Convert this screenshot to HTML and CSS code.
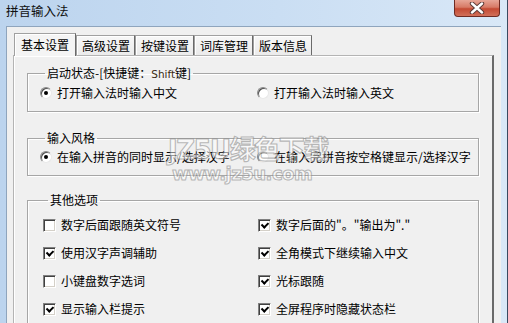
FILE: index.html
```html
<!DOCTYPE html>
<html lang="zh-CN">
<head>
    <meta charset="UTF-8">
    <title>拼音输入法</title>
    <link rel="stylesheet" href="styles.css">
</head>
<body>

    <div class="window">
        <!-- Title bar -->
        <div class="titlebar">
            <span class="title">拼音输入法</span>
            <div class="close">
                <svg viewBox="0 0 20 12" width="20" height="12">
                    <path d="M5 1.5 15 10.5M15 1.5 5 10.5" stroke="#5a3a36" stroke-width="4.4" stroke-linecap="round"></path>
                    <path d="M5 1.5 15 10.5M15 1.5 5 10.5" stroke="#fff" stroke-width="2.4" stroke-linecap="round"></path>
                </svg>
            </div>
        </div>

        <div class="client">
            <!-- Tabs -->
            <div class="tabs">
                <div class="tab active">基本设置</div>
                <div class="tab">高级设置</div>
                <div class="tab">按键设置</div>
                <div class="tab">词库管理</div>
                <div class="tab">版本信息</div>
            </div>

            <div class="panel">
                <fieldset class="group">
                    <legend>启动状态-[快捷键：<span class="latin">Shift</span>键]</legend>
                    <div class="options radios">
                        <label class="opt"><span class="radio checked"></span>打开输入法时输入中文</label>
                        <label class="opt"><span class="radio"></span>打开输入法时输入英文</label>
                    </div>
                </fieldset>

                <fieldset class="group style">
                    <legend>输入风格</legend>
                    <div class="options radios">
                        <label class="opt"><span class="radio checked"></span>在输入拼音的同时显示/选择汉字</label>
                        <label class="opt"><span class="radio"></span>在输入完拼音按空格键显示/选择汉字</label>
                    </div>
                </fieldset>

                <fieldset class="group other">
                    <legend>其他选项</legend>
                    <div class="options checks">
                        <label class="opt"><span class="check"></span>数字后面跟随英文符号</label>
                        <label class="opt"><span class="check checked"></span>数字后面的"。"输出为"."</label>
                        <label class="opt"><span class="check checked"></span>使用汉字声调辅助</label>
                        <label class="opt"><span class="check checked"></span>全角模式下继续输入中文</label>
                        <label class="opt"><span class="check"></span>小键盘数字选词</label>
                        <label class="opt"><span class="check checked"></span>光标跟随</label>
                        <label class="opt"><span class="check checked"></span>显示输入栏提示</label>
                        <label class="opt"><span class="check checked"></span>全屏程序时隐藏状态栏</label>
                    </div>
                </fieldset>
            </div>
        </div>

        <!-- Watermark -->
        <div class="watermark">
            <div class="wm-big">JZ5U绿色下载</div>
            <div class="wm-small">www.jz5u.com</div>
        </div>
    </div>

</body>
</html>
```

FILE: styles.css
```css
body {
    margin: 0;
    width: 508px;
    height: 323px;
    overflow: hidden;
    font-family: "Noto Sans CJK SC", "Liberation Sans", sans-serif;
    font-size: 12px;
    color: #000;
}

.window {
    position: relative;
    height: 323px;
    display: flex;
    flex-direction: column;
    background: linear-gradient(to right, #bcd4ee, #cadef3 55%, #d9e8f7);
    border-right: 1px solid #3a4a60;
    box-sizing: border-box;
}

/* Title bar */
.titlebar {
    height: 26px;
    display: flex;
    align-items: flex-start;
    padding-left: 6px;
    flex-shrink: 0;
}

.title {
    margin-top: 3px;
    line-height: 16px;
    font-size: 12.5px;
    color: #111;
}

.close {
    margin-left: auto;
    margin-right: 7px;
    width: 46px;
    height: 17px;
    box-sizing: border-box;
    border: 1px solid #6e2b23;
    border-top: none;
    border-radius: 0 0 4px 4px;
    background: linear-gradient(to bottom, #e7a697 0%, #d77a66 45%, #c44a33 55%, #d1705a 100%);
    display: flex;
    justify-content: center;
    align-items: center;
}

/* Client area */
.client {
    flex: 1;
    margin-left: 6px;
    margin-right: 6px;
    background-color: #f0f0f0;
    border-left: 1px solid #8fa5bd;
    border-top: 1px solid #8fa5bd;
    padding: 6px 7px 0 6px;
}

.tabs {
    display: flex;
    align-items: flex-end;
    height: 22px;
    padding-left: 1px;
    position: relative;
    z-index: 1;
}

.tab {
    height: 20px;
    line-height: 20px;
    padding: 0 4px 0 5px;
    box-sizing: border-box;
    border: 1px solid #a0a0a0;
    border-bottom: none;
    border-right-color: #6a6a6a;
    box-shadow: inset 1px 1px #fff;
    background: linear-gradient(to bottom, #f7f7f7, #ebebeb);
    white-space: nowrap;
}

.tab.active {
    height: 23px;
    line-height: 21px;
    padding: 0 6px;
    margin-bottom: -1px;
    background: #f4f4f4;
    border-color: #a0a0a0 #6a6a6a transparent #a0a0a0;
}

.panel {
    height: 300px;
    border: 1px solid #b4b4b4;
    border-right: 2px solid #6a6a6a;
    box-shadow: inset 1px 1px #fff;
    background-color: #f0f0f0;
    padding: 10px 13px 0 13px;
}

/* Group boxes */
.group {
    margin: 0;
    padding: 5px 0 11px 12px;
    border: 1px solid #a6a6a6;
    box-shadow: inset 1px 1px #fff, 1px 1px #fff;
    min-width: 0;
}

.group legend {
    margin-left: 5px;
    padding: 0 2px;
    line-height: 14px;
}

.latin {
    font-family: "DejaVu Sans", sans-serif;
    font-size: 10.5px;
    color: #3a2a10;
}

.group.style {
    margin-top: 19px;
}

.group.other {
    margin-top: 17px;
    padding: 11px 0 20px 15px;
}

.options {
    display: grid;
    line-height: 14px;
    white-space: nowrap;
}

.radios {
    grid-template-columns: 217px 1fr;
}

.checks {
    grid-template-columns: 215px 1fr;
    row-gap: 14px;
}

.opt {
    display: flex;
    align-items: center;
    gap: 5px;
}

/* Radio & checkbox, classic sunken look */
.radio {
    width: 12px;
    height: 12px;
    box-sizing: border-box;
    border-radius: 50%;
    background: #fff;
    border: 1px solid;
    border-color: #8a8a8a #e8e8e8 #e8e8e8 #8a8a8a;
    box-shadow: inset 1px 1px #505050;
    position: relative;
    flex-shrink: 0;
}

.radio.checked::after {
    content: "";
    position: absolute;
    left: 3px;
    top: 3px;
    width: 4px;
    height: 4px;
    border-radius: 50%;
    background: #000;
}

.check {
    width: 13px;
    height: 13px;
    box-sizing: border-box;
    background: #fff;
    border: 1px solid;
    border-color: #808080 #fff #fff #808080;
    box-shadow: inset 1px 1px #404040, inset -1px -1px #d4d0c8;
    position: relative;
    flex-shrink: 0;
}

.check.checked::after {
    content: "";
    position: absolute;
    left: 2px;
    top: 1px;
    width: 5px;
    height: 3px;
    border-left: 2px solid #000;
    border-bottom: 2px solid #000;
    transform: translate(0.5px, 1px) rotate(-45deg);
}

/* Watermark over the dialog */
.watermark {
    position: absolute;
    left: 168px;
    top: 134px;
    font-family: "DejaVu Sans", "Noto Sans CJK SC", sans-serif;
    font-weight: bold;
    color: rgba(255, 255, 255, 0.5);
    -webkit-text-stroke: 1.1px rgba(120, 120, 120, 0.5);
    pointer-events: none;
}

.wm-big {
    font-size: 26px;
    line-height: 32px;
    letter-spacing: -1.5px;
}

.wm-small {
    font-size: 18px;
    line-height: 16px;
    margin-left: 4px;
    letter-spacing: -0.5px;
}
```
